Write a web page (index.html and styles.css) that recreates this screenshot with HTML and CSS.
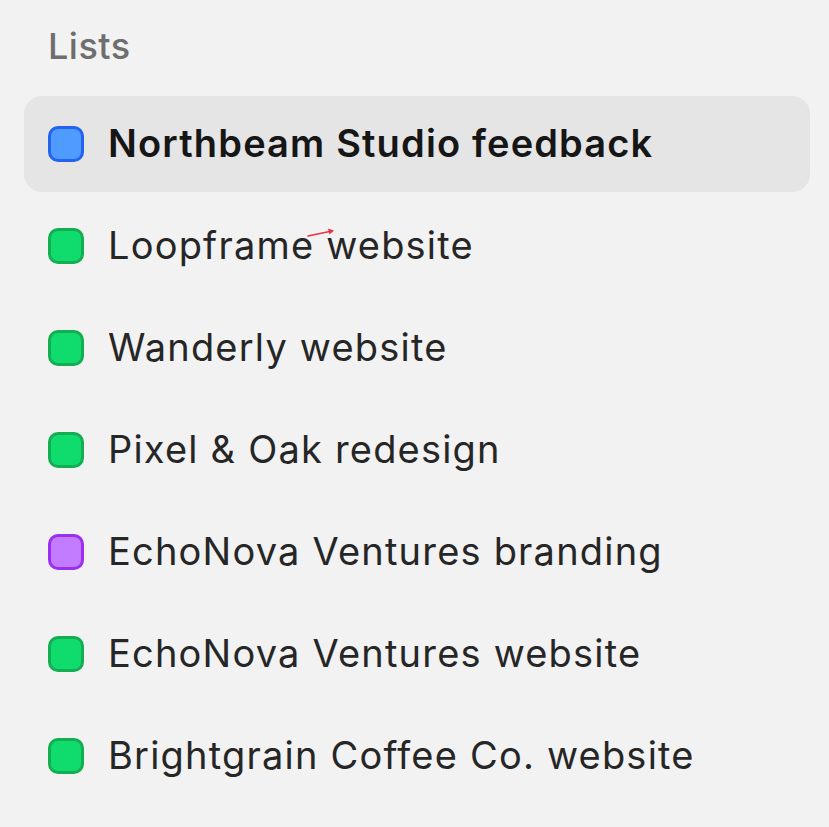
FILE: index.html
```html
<!DOCTYPE html>
<html>
<head>
<meta charset="utf-8">
<link rel="stylesheet" href="styles.css">
</head>
<body>
<div class="panel">
  <div class="heading">Lists</div>
  <ul class="lists">
    <li class="item active"><span class="dot blue"></span><span class="label">Northbeam Studio feedback</span></li>
    <li class="item"><span class="dot green"></span><span class="label">Loopframe website</span></li>
    <li class="item"><span class="dot green"></span><span class="label">Wanderly website</span></li>
    <li class="item"><span class="dot green"></span><span class="label">Pixel &amp; Oak redesign</span></li>
    <li class="item"><span class="dot purple"></span><span class="label">EchoNova Ventures branding</span></li>
    <li class="item"><span class="dot green"></span><span class="label">EchoNova Ventures website</span></li>
    <li class="item"><span class="dot green"></span><span class="label">Brightgrain Coffee Co. website</span></li>
  </ul>
  <svg class="pointer" width="30" height="12" viewBox="0 0 30 12"><path d="M1 9 L25 4" stroke="#e8323c" stroke-width="1.5" fill="none" stroke-linecap="round"/><path d="M21 1.5 L27 3.6 L22.5 7.5 Z" fill="#e8323c"/></svg>
</div>
</body>
</html>
```
FILE: styles.css
```css
html, body {
  margin: 0;
  padding: 0;
  background: #f2f2f2;
}
body {
  font-family: Inter, "Noto Sans", sans-serif;
  color: #262626;
}
.panel {
  position: relative;
  padding: 22px 19px 0 24px;
}
.heading {
  font-size: 36px;
  font-weight: 500;
  color: #6e6e6e;
  line-height: 48px;
  padding-left: 24px;
  letter-spacing: 0.5px;
}
.lists {
  list-style: none;
  margin: 26px 0 0 0;
  padding: 0;
  display: flex;
  flex-direction: column;
  gap: 6px;
}
.item {
  display: flex;
  align-items: center;
  height: 96px;
  padding-left: 24px;
  border-radius: 18px;
  gap: 24px;
}
.item.active {
  background: #e5e5e5;
}
.label {
  font-size: 38px;
  font-weight: 400;
  letter-spacing: 1.2px;
  margin-top: -3px;
}
.active .label {
  font-weight: 600;
  color: #161616;
  letter-spacing: 1.15px;
}
.dot {
  width: 36px;
  height: 36px;
  box-sizing: border-box;
  border-radius: 10px;
  border: 3px solid;
  flex: none;
}
.dot.blue { background: #4f9bff; border-color: #2463f0; }
.dot.green { background: #0fdc6c; border-color: #14ad52; }
.dot.purple { background: #c27cff; border-color: #9a2ef2; }
.pointer {
  position: absolute;
  left: 307px;
  top: 227px;
}
```
